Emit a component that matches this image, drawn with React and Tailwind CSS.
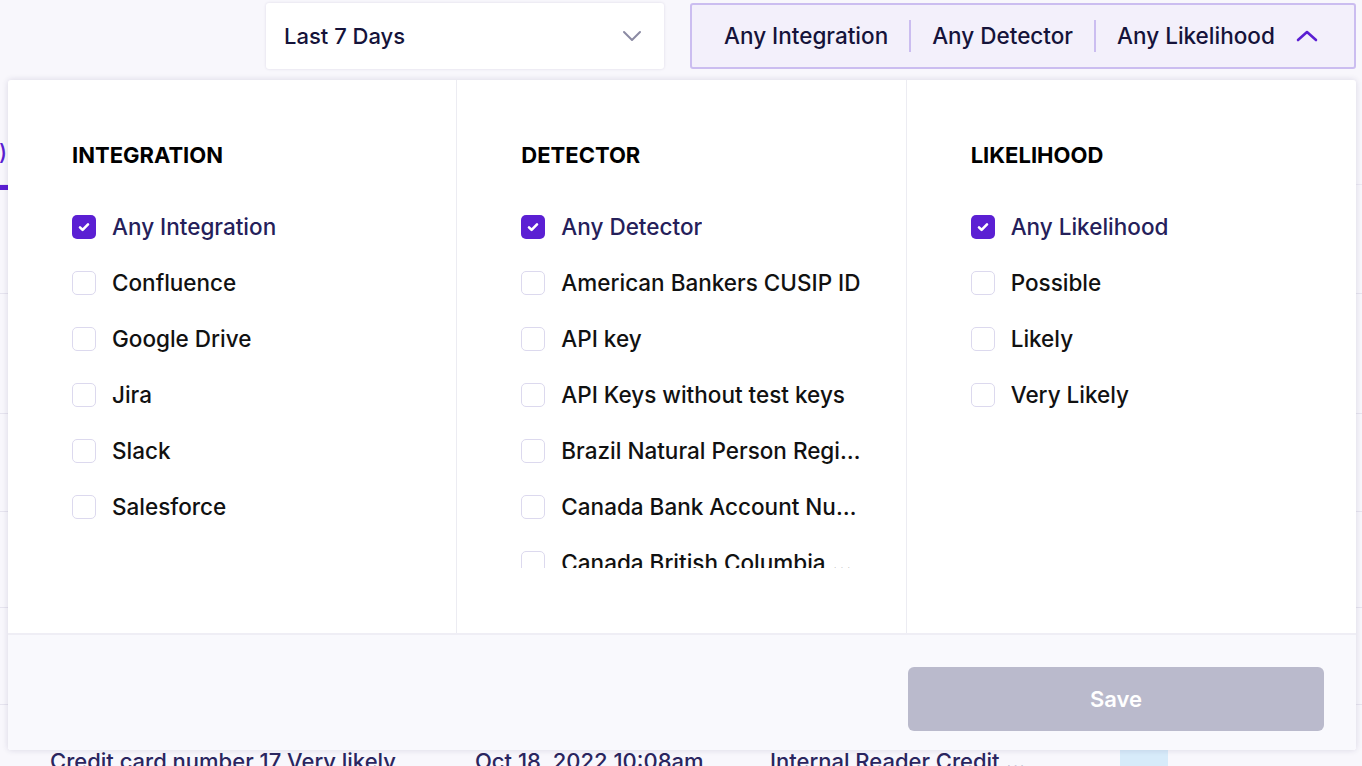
import React from 'react';

const integrations = ['Any Integration', 'Confluence', 'Google Drive', 'Jira', 'Slack', 'Salesforce'];
const detectors = [
    'Any Detector',
    'American Bankers CUSIP ID',
    'API key',
    'API Keys without test keys',
    'Brazil Natural Person Registry Number',
    'Canada Bank Account Number',
    'Canada British Columbia Personal Health Number',
    'Canada Drivers License Number',
];
const likelihoods = ['Any Likelihood', 'Possible', 'Likely', 'Very Likely'];

function Checkbox({ checked }) {
    if (checked) {
        return (
            <span className="flex h-6 w-6 shrink-0 items-center justify-center rounded-[5px] bg-[#5b1fd3]">
                <svg width="14" height="14" viewBox="0 0 14 14" fill="none">
                    <path d="M3 7.3l2.6 2.6L11 4.4" stroke="#fff" strokeWidth="2.6" strokeLinecap="round" strokeLinejoin="round" />
                </svg>
            </span>
        );
    }
    return <span className="h-6 w-6 shrink-0 rounded-[5px] border-[1.5px] border-[#dcd9ee] bg-white" />;
}

function FilterColumn({ title, items, last }) {
    return (
        <div className={`pl-16 pr-[40px] pt-[62px] ${last ? '' : 'border-r border-[#ececf2]'}`}>
            <h3 className="text-[22px] leading-[26px] font-bold text-black">{title}</h3>
            <div className="mt-[31px] h-[369px] overflow-hidden">
                {items.map((item, i) => (
                    <label key={item} className="flex h-14 items-center gap-4">
                        <Checkbox checked={i === 0} />
                        <span className={`truncate text-[22.5px] font-medium ${i === 0 ? 'text-[#25205a]' : 'text-[#111]'}`}>
                            {item}
                        </span>
                    </label>
                ))}
            </div>
        </div>
    );
}

export default function App() {
    return (
        <div className="relative h-[766px] w-[1362px] overflow-hidden bg-[#f8f7fc] font-['Inter',sans-serif]">
            {/* Top filter bar */}
            <div className="flex justify-end gap-[26px] pt-[3px] pr-[6px]">
                <div className="flex h-[66px] w-[398px] items-center justify-between rounded-[3px] bg-white pl-[18px] pr-[22px] shadow-[0_0_3px_rgba(30,20,80,0.12)]">
                    <span className="text-[22px] font-medium text-[#15133a]">Last 7 Days</span>
                    <svg width="20" height="12" viewBox="0 0 20 12" fill="none">
                        <path d="M2 2l8 8 8-8" stroke="#8b8aa3" strokeWidth="2" strokeLinecap="round" strokeLinejoin="round" />
                    </svg>
                </div>
                <div className="flex h-[66px] w-[666px] items-center rounded-[3px] border-2 border-[#cbbdf0] bg-[#f3f0fb] pl-[32px] pr-[36px]">
                    <span className="text-[22.5px] font-medium text-[#15133a]">Any Integration</span>
                    <span className="mx-[21px] h-[32px] w-[2px] bg-[#cbbdf0]" />
                    <span className="text-[22.5px] font-medium text-[#15133a]">Any Detector</span>
                    <span className="mx-[21px] h-[32px] w-[2px] bg-[#cbbdf0]" />
                    <span className="text-[22.5px] font-medium text-[#15133a]">Any Likelihood</span>
                    <svg className="ml-auto" width="22" height="14" viewBox="0 0 22 14" fill="none">
                        <path d="M2 11l9-8 9 8" stroke="#5b1fd3" strokeWidth="2.6" strokeLinecap="round" strokeLinejoin="round" />
                    </svg>
                </div>
            </div>

            {/* Page content behind the dropdown */}
            <div className="mt-[68px] text-[22px] font-medium text-[#2a2660]">
                <div className="h-[48px] border-b border-[#ebe9f3]">
                    <div className="flex w-[7px] justify-end overflow-hidden">
                        <span className="whitespace-nowrap text-[#5b1fd3]">Findings (12)</span>
                    </div>
                </div>
                <div className="h-[5px] w-[200px] bg-[#5b1fd3]" />
                <div className="h-[104px] border-b border-[#e6e4ef]" />
                <div className="h-[120px] border-b border-[#e6e4ef]" />
                <div className="h-[98px] border-b border-[#e6e4ef]" />
                <div className="h-[96px] border-b border-[#e6e4ef]" />
                <div className="h-[97px] border-b border-[#e6e4ef]" />
                <div className="flex h-[98px] items-start pt-[40px]">
                    <span className="ml-[50px] w-[425px] whitespace-nowrap">Credit card number 17 Very likely</span>
                    <span className="w-[295px] whitespace-nowrap">Oct 18, 2022 10:08am</span>
                    <span className="w-[350px] whitespace-nowrap">Internal Reader Credit ...</span>
                    <span className="h-6 w-12 rounded bg-[#d7ebfa]" />
                </div>
            </div>

            {/* Dropdown panel */}
            <div className="absolute left-[8px] top-[80px] flex h-[670px] w-[1348px] flex-col overflow-hidden rounded-[3px] bg-white shadow-[0_0_6px_rgba(30,20,80,0.14)]">
                <div className="grid h-[553px] grid-cols-3">
                    <FilterColumn title="INTEGRATION" items={integrations} />
                    <FilterColumn title="DETECTOR" items={detectors} />
                    <FilterColumn title="LIKELIHOOD" items={likelihoods} last />
                </div>
                <div className="flex flex-1 justify-end border-t-2 border-[#efeef5] bg-[#f9f9fd] pr-8 pt-[32px]">
                    <button className="h-16 w-[416px] rounded-[6px] bg-[#babacc] text-[22px] font-semibold text-white">
                        Save
                    </button>
                </div>
            </div>
        </div>
    );
}
